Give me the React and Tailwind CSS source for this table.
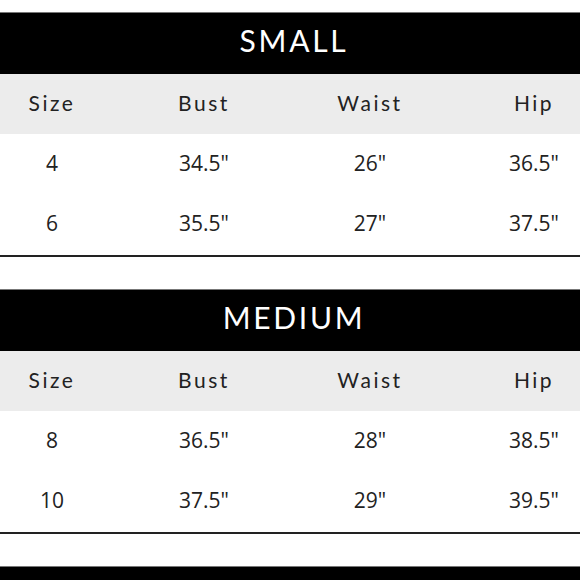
const charts = [
  {
    title: 'SMALL',
    rows: [
      ['4', '34.5"', '26"', '36.5"'],
      ['6', '35.5"', '27"', '37.5"'],
    ],
  },
  {
    title: 'MEDIUM',
    rows: [
      ['8', '36.5"', '28"', '38.5"'],
      ['10', '37.5"', '29"', '39.5"'],
    ],
  },
];

const headers = ['Size', 'Bust', 'Waist', 'Hip'];

const Row = ({ cells, className, cellClass }) => (
  <div className={`grid grid-cols-[104px_200px_132px_1fr] items-center ${className}`}>
    {cells.map((c, i) => (
      <div key={i} className={`text-center ${i === 3 ? 'pl-[52px]' : ''} ${cellClass}`}>
        {c}
      </div>
    ))}
  </div>
);

const SizeChart = ({ title, rows }) => (
  <div className="mb-[32px]">
    {/* title band */}
    <div className="h-[62px] bg-black border-t border-[#777] flex items-center justify-center pb-[7px] pl-[8px]">
      <span className="text-white text-[30px] tracking-[0.09em] font-['Lato',sans-serif] leading-none">
        {title}
      </span>
    </div>

    {/* column headers */}
    <Row
      cells={headers}
      className="h-[60px] bg-[#ececec] pb-[3px]"
      cellClass="text-[21px] tracking-[0.12em] text-[#222] font-['Lato',sans-serif]"
    />

    {rows.map((r, i) => (
      <Row
        key={i}
        cells={r}
        className={i === 0 ? 'h-[61px] pb-[2px]' : 'h-[60px] pb-[2px]'}
        cellClass="text-[21px] text-[#222] font-['Open_Sans',sans-serif]"
      />
    ))}
    <div className="h-[2px] bg-[#222]" />
  </div>
);

export default function App() {
  return (
    <div className="w-[580px] h-[580px] overflow-hidden bg-white pt-[12px]">
      {charts.map((c) => (
        <SizeChart key={c.title} title={c.title} rows={c.rows} />
      ))}
      {/* next chart's band, cut off by the frame */}
      <div className="h-[62px] bg-black border-t border-[#777]" />
    </div>
  );
}
